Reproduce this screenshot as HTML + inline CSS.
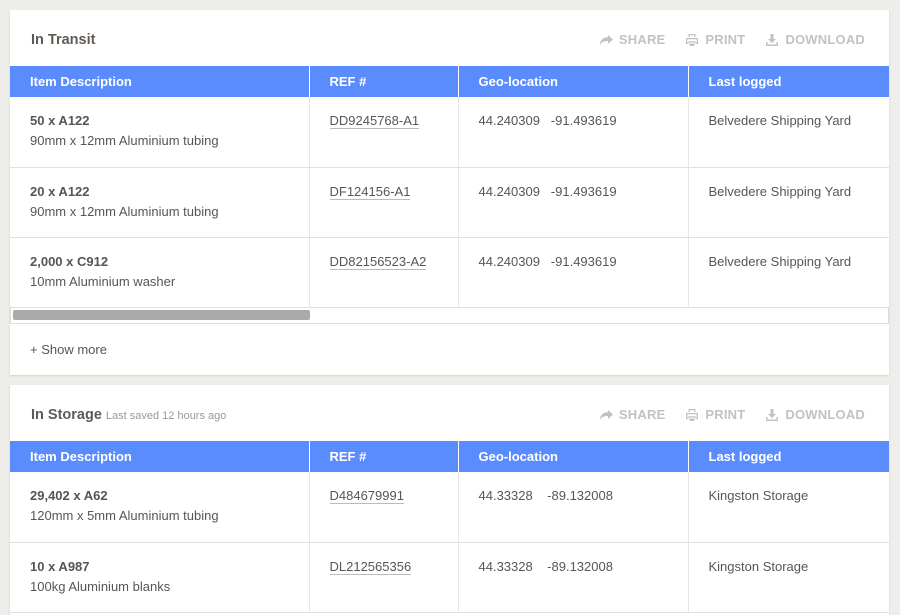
<!DOCTYPE html>
<html><head><style>
*{box-sizing:border-box;margin:0;padding:0}
body{width:900px;height:600px;overflow:hidden;background:#efedea;font-family:"Liberation Sans",sans-serif;color:#5a5550;position:relative}
.card{position:absolute;left:10px;width:879px;background:#fff;box-shadow:0 1px 2px rgba(0,0,0,.12);overflow:hidden}
.title{position:absolute;left:21px;font-size:14.5px;font-weight:bold;color:#605a55}
.title small{font-size:11px;font-weight:normal;color:#999;margin-left:4px}
.acts{position:absolute;right:24px;font-size:13px;font-weight:bold;color:#c2c2c2;display:flex;gap:20px;letter-spacing:.2px}
.acts span{display:flex;align-items:center;gap:6px}
.acts svg{width:14px;height:14px;fill:#c2c2c2}
table{position:absolute;left:0;border-collapse:collapse;table-layout:fixed;width:879px}
th{background:#5b8cfe;color:#fff;font-size:13px;font-weight:bold;text-align:left;height:31px;padding:0 20px;border-left:1px solid #fff}
th:first-child,td:first-child{border-left:none}
td{height:70px;vertical-align:top;padding:14px 20px 0;font-size:13px;border-left:1px solid #e6e6e6;border-bottom:1px solid #e0e0e0;line-height:20px}
td b{color:#555}
u{text-decoration:none;border-bottom:1px solid #bbb}
.sb{position:absolute;left:0;top:297px;width:879px;height:17px;border:1px solid #ddd;border-top:none}
.thumb{position:absolute;left:2px;top:3px;width:297px;height:10px;background:#aaa;border-radius:2px}
.more{position:absolute;left:20px;top:332px;font-size:13px}
</style></head><body>
<svg width="0" height="0" style="position:absolute"><defs>
<symbol id="sh" viewBox="0 0 14 14"><path d="M9 2l5 4.5L9 11V8C5 8 2.5 9 1 12c0-4 2-7.5 8-8z"/></symbol>
<symbol id="pr" viewBox="0 0 14 14"><path d="M3.5 1h7v3h-1.3V2.3H4.8V4H3.5zM1 5h12v6h-2.5V9.5h-7V11H1zm1.3 1.3v3.4h.9V8.2h7.6v1.5h.9V6.3zM4.5 10.5h5V13h-5z"/></symbol>
<symbol id="dl" viewBox="0 0 14 14"><path d="M5.5 1h3v5h2.5L7 10 3 6h2.5zM1 9h1.5v2.5h9V9H13v4H1z"/></symbol>
</defs></svg>
<div class="card" style="top:10px;height:365px">
<div class="title" style="top:22px">In Transit</div>
<div class="acts" style="top:22px"><span><svg><use href="#sh"/></svg>SHARE</span><span><svg><use href="#pr"/></svg>PRINT</span><span><svg><use href="#dl"/></svg>DOWNLOAD</span></div>
<table style="top:56px"><colgroup><col style="width:299px"><col style="width:149px"><col style="width:230px"><col></colgroup>
<tr><th>Item Description</th><th>REF #</th><th>Geo-location</th><th>Last logged</th></tr>
<tr><td><b>50 x A122</b><br>90mm x 12mm Aluminium tubing</td><td><u>DD9245768-A1</u></td><td>44.240309&nbsp;&nbsp; -91.493619</td><td>Belvedere Shipping Yard</td></tr>
<tr><td><b>20 x A122</b><br>90mm x 12mm Aluminium tubing</td><td><u>DF124156-A1</u></td><td>44.240309&nbsp;&nbsp; -91.493619</td><td>Belvedere Shipping Yard</td></tr>
<tr><td><b>2,000 x C912</b><br>10mm Aluminium washer</td><td><u>DD82156523-A2</u></td><td>44.240309&nbsp;&nbsp; -91.493619</td><td>Belvedere Shipping Yard</td></tr>
</table>
<div class="sb"><div class="thumb"></div></div>
<div class="more">+ Show more</div>
</div>
<div class="card" style="top:385px;height:230px">
<div class="title" style="top:22px">In Storage<small>Last saved 12 hours ago</small></div>
<div class="acts" style="top:22px"><span><svg><use href="#sh"/></svg>SHARE</span><span><svg><use href="#pr"/></svg>PRINT</span><span><svg><use href="#dl"/></svg>DOWNLOAD</span></div>
<table style="top:56px"><colgroup><col style="width:299px"><col style="width:149px"><col style="width:230px"><col></colgroup>
<tr><th>Item Description</th><th>REF #</th><th>Geo-location</th><th>Last logged</th></tr>
<tr><td><b>29,402 x A62</b><br>120mm x 5mm Aluminium tubing</td><td><u>D484679991</u></td><td>44.33328&nbsp;&nbsp;&nbsp; -89.132008</td><td>Kingston Storage</td></tr>
<tr><td><b>10 x A987</b><br>100kg Aluminium blanks</td><td><u>DL212565356</u></td><td>44.33328&nbsp;&nbsp;&nbsp; -89.132008</td><td>Kingston Storage</td></tr>
</table>
</div>
</body></html>
